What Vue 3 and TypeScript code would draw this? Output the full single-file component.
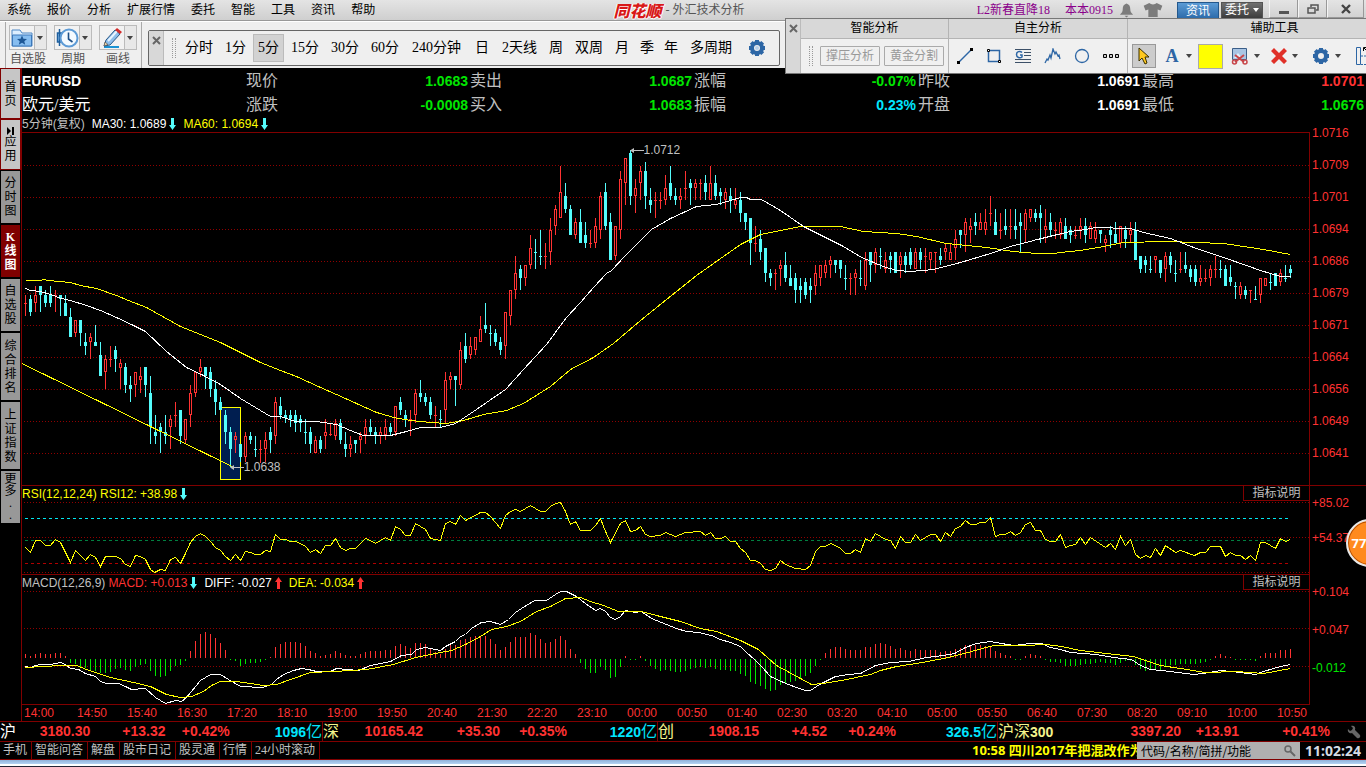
<script setup lang="ts">
const menus = ['系统', '报价', '分析', '扩展行情', '委托', '智能', '工具', '资讯', '帮助']

const periods = [
  { label: '分时', pad: '' }, { label: '1分', pad: '' }, { label: '5分', pad: 'active' },
  { label: '15分', pad: '' }, { label: '30分', pad: '' }, { label: '60分', pad: '' },
  { label: '240分钟', pad: 'roomy' }, { label: '日', pad: 'roomy' }, { label: '2天线', pad: '' },
  { label: '周', pad: '' }, { label: '双周', pad: '' }, { label: '月', pad: '' },
  { label: '季', pad: 'tight' }, { label: '年', pad: 'tight' }, { label: '多周期', pad: 'roomy' },
]

const sideTabs = [
  { chars: ['首', '页'], kind: 'light h2' },
  { chars: ['应', '用'], kind: 'light h2', icon: true },
  { chars: ['分', '时', '图'], kind: 'h3' },
  { chars: ['K', '线', '图'], kind: 'current h3' },
  { chars: ['自', '选', '股'], kind: 'h3' },
  { chars: ['综', '合', '排', '名'], kind: 'h4' },
  { chars: ['上', '证', '指', '数'], kind: 'h4' },
  { chars: ['更', '多', '.', '.'], kind: 'h3 more' },
]

const quotes = [
  { label: '现价', value: '1.0683', tone: 'down' }, { label: '卖出', value: '1.0687', tone: 'down' },
  { label: '涨幅', value: '-0.07%', tone: 'down' }, { label: '昨收', value: '1.0691', tone: 'flat' },
  { label: '最高', value: '1.0701', tone: 'up' },
  { label: '涨跌', value: '-0.0008', tone: 'down' }, { label: '买入', value: '1.0683', tone: 'down' },
  { label: '振幅', value: '0.23%', tone: 'aqua' }, { label: '开盘', value: '1.0691', tone: 'flat' },
  { label: '最低', value: '1.0676', tone: 'down' },
]

const priceTicks = ['1.0716', '1.0709', '1.0701', '1.0694', '1.0686', '1.0679', '1.0671', '1.0664', '1.0656', '1.0649', '1.0641']
const times = ['14:00', '14:50', '15:40', '16:30', '17:20', '18:10', '19:00', '19:50', '20:40', '21:30', '22:20', '23:10', '00:00', '00:50', '01:40', '02:30', '03:20', '04:10', '05:00', '05:50', '06:40', '07:30', '08:20', '09:10', '10:00', '10:50']

const indices = [
  { name: '沪', num: '', tone: 'white', last: '3180.30', diff: '+13.32', pct: '+0.42%', amount: '1096', cls: 's1' },
  { name: '深', num: '', tone: 'cream', last: '10165.42', diff: '+35.30', pct: '+0.35%', amount: '1220', cls: 's2' },
  { name: '创', num: '', tone: 'cream', last: '1908.15', diff: '+4.52', pct: '+0.24%', amount: '326.5', cls: 's3' },
  { name: '沪深', num: '300', tone: 'cream', last: '3397.20', diff: '+13.91', pct: '+0.41%', amount: '', cls: 's4' },
]
const links = ['手机', '智能问答', '解盘', '股市日记', '股灵通', '行情', '24小时滚动']

/* Candles: direction, high, low, then body top and bottom (one number for a doji).
   Levels are in thirds of a pixel, measured from the batch's own top. */
const batches: { top: number; rows: string }[] = [
  { top: 60, rows: 'r 705 768 730,c 705 768 717 756,r 678 756 705 730,c 678 756 678 705,c 690 742 705 730,c 678 742 703 730,r 690 756 705,c 705 768 705 717,c 705 768 730 768' },
  { top: 300, rows: 'c 24 110 52 110,r 60 110 60 98,c 60 138 60 98,c 98 165 126 138,r 98 177 110 126,c 75 138 126 138,c 126 228 165 228,r 165 266 177 216,r 138 202 177,c 138 216 150 177,r 177 266 190 203,c 190 278 202 255,c 228 305 255 266,r 216 290 216 255,r 202 278 228 241,c 202 290 202 255,c 228 432 278 380,c 345 432 396 408,c 369 459 380 396,c 345 432 396 408,r 345 447 357 380,r 306 380 345,c 330 432 330 408,r 357 432 357 420,r 255 380 278 345,r 213 290 216 278,r 177 230 201 216,c 201 266 201 228,c 201 290 216 266,c 240 345 266 305,c 290 330 305 330,c 330 432 345 396,c 380 500 396 447,r 396 459 408 420,c 432 486 432 470,r 396 486 408 470,c 396 432 408 420,c 408 470 447,r 420 490 447,r 396 486 420 447,c 380 459 396 420,r 290 432 306 408,c 290 357 318 345,c 330 369 345 354,c 330 380 345 357,c 330 396 345 369,c 345 396 357 369,c 357 432 396,c 380 459 396 432,r 408 459 420 459,c 408 459 420 447,r 357 447 396 408,r 369 408 404,r 357 420 369 408,c 357 432 369 420,c 396 470 432 447,r 408 470 432 447,c 420 459 420 432,r 396 459 408 420,r 357 432 380 405,c 357 408 380 396,c 380 432 396 405,r 380 432 396 408,r 357 420 380 405' },
  { top: 130, rows: 'c 878 917 890 905,r 828 917 828 905,c 801 855 816 840,c 840 890 855 868,r 840 917 868,r 777 878 789 855,c 750 816 789 801,c 789 828 801 816,c 801 866 816 855,r 828 890 856,c 840 892 868,r 726 880 750 840,r 726 777 738 750,c 738 828 738 750,r 636 777 660 765,c 609 699 648 687,r 621 687 648 675,r 621 675 621 660,r 558 636 597 636,c 519 609 585 597,c 585 648 610,c 597 648 609 636,c 621 675 636 660,r 546 687 546 648,r 480 585 480 557,r 378 507 429 480,c 405 480 417 444,r 405 468 405 444,r 315 417 354 405,c 327 417 367,c 300 405 379,r 339 417 379,r 264 405 300 366,r 225 315 237 288,r 108 264 186 263,c 159 249 198 237,c 225 315 237 315,r 264 327 276 315,c 237 339 276 339,c 276 354 315 339,r 300 354 340,r 264 354 288 339,r 186 327 198 300,c 159 300 186 288,c 249 390 276 390,r 288 390 288 378,r 123 327 147 300,r 84 225 84 159,c 60 225 69 198,r 147 249 174 198,r 108 210 123 159,c 96 237 123 198,c 174 249 210 225,r 186 264 211,r 186 237 211,r 135 225 174 210,c 108 210 159 198,c 174 225 198 210,r 174 237 198 210,r 123 210 175,c 147 225 159 174,r 147 210 159 174,r 147 210 160,c 135 210 159 186,r 108 210 159 210,c 135 210 159 198,c 174 225 186 198,r 174 237 186 210,c 174 249 198 210,r 174 237 210 225,c 186 276 210 249,c 249 300 249 276,c 264 405 264 339,r 288 366 340,c 300 390 327 366,c 354 456 354 429,c 417 468 429 444,r 417 480 430' },
  { top: 130, rows: 'r 390 468 405 417,c 366 456 405 444,c 405 468 444 468,c 429 519 444 480,c 444 519 468 480,c 444 507 456 495,c 444 519 468 480,r 405 495 429 468,r 405 468 405 444,r 390 444 405 429,r 378 444 390 405,c 390 429 390 405,c 390 444 390 417,c 405 480 445,r 429 495 445,r 417 495 429 444,c 390 468 445,r 366 480 390 468,c 366 456 366 405,r 354 429 366 405,c 354 417 379,r 366 429 390 417,c 366 429 378 390,c 366 429 366 429,r 366 444 378 405,c 366 429 378 405,c 354 417 366 405,r 354 417 366 417,c 354 417 366 390,r 354 429 379,r 366 417 366 390,r 366 429 367,c 354 405 378 390,r 342 390 354 366,r 339 390 366 390,r 300 390 327 354,c 300 354 300 315,r 264 366 276 315,r 264 339 288 300,c 249 315 276 288,r 249 300 276 300,r 237 315 276 300,r 198 288 250,c 237 315 276 315,r 249 327 301,c 237 315 288 300,r 237 327 289,c 237 327 288 300,c 249 366 276 288,r 237 339 249 300,r 237 276 237 264,c 237 276 249 264,c 225 339 249 264,r 237 339 288 300,c 249 318 276 300,r 276 327 301,r 264 327 276 315,c 264 327 288 327,c 288 339 300 315,r 288 327 316,r 264 327 288 300,c 264 339 288 315,r 276 327 288 327,r 276 339 300 327' },
  { top: 180, rows: 'c 150 189 150 162,r 165 216 177 190,c 138 204 150 165,c 126 189 162 189,r 138 204 138 189,c 138 204 150 177,r 126 189 150 165,c 126 240 150 240,c 228 279 228 267,c 228 279 240 255,c 228 279 268,r 228 279 228 240,c 240 294 240 279,r 216 306 228 267,c 216 279 228 255,c 240 306 280,r 216 279 268,c 216 279 255 267,c 255 306 267 291,c 255 318 267 306,r 255 318 294 306,r 267 306 295,r 255 318 267 294,r 228 294 268,c 240 294 268,c 255 318 267 318,c 255 318 291 306,c 306 357 319,r 306 357 318 345,c 318 357 330 345,r 330 369 331,c 318 360 358,r 294 369 294 345,r 294 318 294 318,c 279 330 307,c 279 318 279 318,r 267 318 279 306,c 255 306 295,c 255 294 267 279' },
]

const box = (x: number, y1: number, y2: number, w: number) => `M${x} ${y1}h${w}V${y2}h${-w}z`

function buildCandles(): { rise: string; fall: string } {
  let rise = ''
  let fall = ''
  let x = 25
  for (const batch of batches) {
    for (const row of batch.rows.split(',')) {
      const [dir, ...raw] = row.split(' ')
      const v = raw.map(n => batch.top + Number(n) / 3)
      const hi = Math.round(v[0])
      const lo = Math.round(v[1])
      const flat = v.length === 3
      const top = flat ? Math.floor(v[2]) : Math.round(v[2])
      const bottom = flat ? top + 1 : Math.round(v[3])
      let d = box(x - 1, top, bottom, 3)
      if (hi < top) d += box(x, hi, top, 1)
      if (lo > bottom) d += box(x, bottom, lo, 1)
      if (dir === 'r') {
        if (bottom - top > 2) d += box(x, top + 1, bottom - 1, 1)
        rise += d
      } else {
        fall += d
      }
      x += 5
    }
  }
  return { rise, fall }
}
const candles = buildCandles()

/* Histogram bar ends, same third-of-a-pixel scale; the zero line lies between 534 and 537. */
const bars = '522 528 522 519 522 522 519 519 528 549 552 561 564 570 573 579 579 576 567 564 570 573 561 555 552 573 588 591 588 573 558 555 543 513 483 462 456 462 474 489 510 537 543 558 552 549 549 546 537 531 501 492 486 486 486 489 498 513 519 528 525 522 513 519 525 528 528 522 516 513 513 513 510 510 498 492 498 504 489 489 492 504 516 522 508 495 495 480 477 471 468 468 468 477 492 510 501 486 471 471 471 459 465 477 489 486 477 468 480 507 522 549 567 579 579 561 570 594 591 561 528 537 537 528 543 558 567 573 570 573 576 576 573 567 564 561 564 561 567 570 570 573 573 582 588 606 612 618 627 633 630 615 612 606 603 597 588 579 558 537 519 507 501 501 507 510 510 510 501 501 492 489 492 498 507 504 510 513 507 510 510 510 510 516 513 513 507 504 495 498 495 495 498 501 513 519 525 528 537 537 528 522 525 528 537 546 546 549 558 558 558 555 552 552 549 546 549 549 555 549 543 543 555 567 573 570 570 570 558 555 555 552 552 552 552 549 546 537 528 522 528 531 537 537 540 540 543 528 519 519 519 510 510 507'.split(' ').map(Number)

function buildBars(above: boolean): string {
  return bars.map((v, i) => {
    const x = 25 + i * 5
    const end = 480 + v / 3
    if (above) return v < 535 ? box(x, Math.round(end), 658, 1) : ''
    return v > 535 ? box(x, 659, Math.max(660, Math.round(end)), 1) : ''
  }).join('')
}
const barsUp = buildBars(true)
const barsDown = buildBars(false)

type Piece = [number, number, string]
function trace(pieces: Piece[]): string {
  return pieces.map(([ox, oy, pts]) => pts.split(' ').map(p => {
    const [a, b] = p.split(',').map(Number)
    return `${Math.floor(ox + a / 3) + 0.5},${Math.floor(oy + b / 3) + 0.5}`
  }).join(' ')).join(' ')
}

const ma30 = trace([
  [0, 60, '75,685 90,690 120,694 150,703 185,714'],
  [0, 300, '210,0 260,15 300,30 350,51 400,75 437,95 500,153 560,202 610,226 660,253 720,296 780,332 810,348 840,350 885,363 950,365 1010,372 1050,390 1090,406'],
  [380, 130, '0,917 30,915 80,905 120,892 180,892 225,879 280,843 375,777 430,718 500,642 560,563 600,516 640,472 680,429 695,420 735,375 770,342 815,297 870,264 950,230 1010,223 1050,210'],
  [700, 130, '120,202 138,202 150,208 185,208 240,240 310,288 370,320 430,349 485,382 550,408 590,422 630,424 700,417 780,396 870,370 930,348 1000,332 1060,316'],
  [1060, 180, '30,155 75,149 105,143 150,142 165,145 212,146 250,158 330,175 410,206 500,234 600,270 660,289 690,289'],
])
const ma60 = trace([
  [0, 60, '75,661 120,661 130,658 145,661 210,666 240,675 290,686 350,706'],
  [0, 300, '385,0 440,21 540,79 660,127 780,187 840,211 890,229 960,263 1010,282 1070,310 1130,336'],
  [380, 130, '0,850 40,863 90,870 150,876 200,880 250,870 310,852 380,841 430,820 510,769 570,719 640,682 700,640 780,570 860,507 950,436 1080,342'],
  [700, 130, '180,314 300,289 420,289 490,303 590,311 650,319 740,341 860,352 940,364 1010,370 1060,370'],
  [1060, 180, '0,217 60,210 130,198 190,187 320,184 410,188 490,191 550,198 610,207 690,223'],
])
const rsi = trace([
  [0, 480, '75,201 92,217 107,181 122,181 137,196 152,196 167,178 182,187 212,247 227,211 257,241 272,223 287,232 302,259 317,229 347,229 362,235 377,252 392,259 407,226 422,229 437,238 452,268 464,277 482,268 497,271 512,238 527,232 542,250 557,220 572,187 587,168 600,159 617,168 632,184 647,201 662,211 677,229 692,241 707,223 722,241 737,213 752,216 767,222 782,222 797,211 812,214 826,163 842,178 857,178 872,184 887,184 902,190 917,199 932,217 947,208 962,220 977,197 992,196 1007,175 1022,202 1037,211 1052,205 1067,205 1082,190 1097,175 1112,181 1127,189 1142,181 1157,173 1172,180 1187,139 1202,147 1217,166 1232,166 1247,130 1262,139 1277,148 1292,174'],
  [440, 480, '0,181 15,130 30,124 47,133 62,106 77,121 122,97 137,97 152,109 182,145 197,106 212,93 227,87 242,94 272,76 302,94 317,94 332,79 347,70 362,67 377,94 392,133 407,124 422,151 452,151 467,136 482,115 497,154 512,187 542,130 557,121 572,154 587,151 602,139 617,163 632,169 662,166 677,157 707,169 737,157 752,157 767,154 782,154 797,165 812,157 827,175 842,175 857,169 872,183 887,184 902,205 917,217 932,241 947,241 962,250 977,267 990,271 1005,264 1021,241 1037,253 1065,265 1097,268 1112,255 1127,213 1142,199 1157,199 1172,190 1187,196 1202,205 1217,220 1232,220 1247,208 1262,217 1276,175 1292,184 1307,160'],
  [880, 480, '0,169 15,177 32,180 47,205 62,170 77,187 92,187 107,162 122,180 152,163 167,163 182,184 197,157 212,168 227,145 242,138 257,121 272,133 287,133 302,127 317,127 332,112 347,169 362,163 377,163 392,154 407,165 422,157 437,133 452,127 467,151 482,151 497,177 512,184 527,184 542,163 557,202 572,195 587,193 602,172 617,193 632,172 677,202 692,190 707,208 722,170 737,195 752,178 767,223 782,235 797,226 812,232 827,205 842,226 857,196 887,217 902,211 942,226 962,217 977,217 992,199 1022,199 1037,229 1052,217 1067,226 1082,226 1097,237 1112,226 1127,241 1142,187 1157,187 1187,205 1202,175 1217,184 1230,178'],
])
const diff = trace([
  [0, 480, '75,559 90,562 105,556 120,553 150,553 182,547 195,552 212,565 235,567 255,580 285,588 302,604 320,609 355,610 375,618 393,628 437,625 465,652 497,670 525,661 545,664 560,653 600,601 630,583 660,583 685,598 722,619 787,622 815,613 830,597 850,582 880,570 905,564 925,567 950,573 990,574 1010,565 1075,570 1110,555 1170,544 1205,525 1235,522 1250,508 1275,501'],
  [440, 480, '0,512 15,500 45,483 62,469 75,463 95,445 125,428 150,423 182,433 205,417 225,397 245,385 282,361 320,361 345,343 360,333 380,334 410,348 435,370 465,391 482,385 497,393 510,413 525,418 542,410 557,391 585,397 605,395 635,415 680,432 710,446 740,453 775,456 815,465 840,478 870,486 900,500 920,517 945,541 965,560 990,590 1030,608 1070,622 1097,632 1112,631 1130,618 1150,607 1185,589 1225,583 1260,580 1305,557'],
  [880, 480, '0,552 30,546 85,543 140,533 190,527 222,520 257,502 290,490 332,484 365,491 400,496 450,490 485,490 510,501 540,507 570,518 650,523 700,532 755,538 780,555 812,568 870,573 940,583 970,580 1020,571 1080,577 1127,583 1150,573 1200,560 1230,553'],
])
const dea = trace([
  [0, 480, '75,562 130,560 180,555 230,556 260,567 330,592 400,608 450,620 500,642 540,652 575,650 610,633 635,616 660,604 710,604 750,609 790,616 830,613 870,597 930,577 1000,573 1100,567 1180,553 1245,532'],
  [440, 480, '0,516 35,510 75,493 120,468 155,448 200,439 240,423 290,394 330,378 375,355 420,352 450,364 490,375 535,394 605,394 650,405 720,425 780,444 830,454 900,480 955,508 1010,555 1080,595 1115,612 1150,611 1220,597 1290,583'],
  [880, 480, '0,572 50,558 110,549 190,535 240,524 340,496 430,496 500,492 545,499 600,512 680,521 760,530 840,556 900,566 975,577 1070,575 1150,579 1230,565'],
])

const priceGrid = Array.from({ length: 10 }, (_, i) => 165.5 + i * 32)
const peaks = [
  { text: '1.0712', x: 608, y: 10 },
  { text: '1.0638', x: 208, y: 327 },
].map(p => ({ text: p.text, style: { left: (p.x / 1288) * 100 + '%', top: p.y + 'px' } }))
</script>

<template>
  <div class="app">
    <header class="titlebar">
      <nav class="menu"><button v-for="m in menus" :key="m" type="button">{{ m }}</button></nav>
      <div class="title"><strong class="logo">同花顺</strong><span>- 外汇技术分析</span></div>
      <div class="tools">
        <a href="#" class="promo">L2新春直降18</a>
        <a href="#" class="user">本本0915</a>
        <svg class="bell" width="15" height="16" viewBox="0 0 16 16"><path d="M8 1c-3 1-4 3-4 6 0 3-1 4-3 6h14c-2-2-3-3-3-6 0-3-1-5-4-6z M6 14h4l-2 2z" fill="#7c7c7c" /></svg>
        <svg class="shirt" width="20" height="14" viewBox="0 0 20 15"><path d="M6 0C8 2 12 2 14 0l6 3-2 5-3-1v8H5V7L2 8 0 3z" fill="#7c7c7c" /></svg>
        <button type="button" class="chip blue">资讯</button>
        <button type="button" class="chip dark">委托<i class="caret light"></i></button>
        <div class="window">
          <button type="button" aria-label="最小化"><svg width="12" height="12" viewBox="0 0 12 12"><path d="M1 8h10v3H1z" fill="#555" /></svg></button>
          <button type="button" aria-label="还原"><svg width="12" height="12" viewBox="0 0 12 12" fill="none" stroke="#555" stroke-width="1.500"><path d="M4 4V2h7v5H9M1 5h7v5H1z" /></svg></button>
          <button type="button" aria-label="关闭" class="wide"><svg width="12" height="12" viewBox="0 0 12 12" stroke="#444" stroke-width="2.400"><path d="M2 2l8 8M10 2l-8 8" /></svg></button>
        </div>
      </div>
    </header>

    <section class="ribbon">
      <div class="quick">
        <div class="quick-item">
          <button type="button" aria-label="自选股">
            <svg width="24" height="24" viewBox="0 0 24 24"><path d="M2 4h8l2 3h10v13H2z" fill="#dceeff" stroke="#4c86c4" /><path d="M2.500 9h19v11h-19z" fill="#86bdf0" stroke="#3c78ba" /><path d="M12 9.500l1.400 3.200 3.600.3-2.700 2.200.9 3.500-3.200-1.900-3.200 1.900.9-3.500L7 13l3.600-.3z" fill="#1d5796" /></svg>
            <i class="caret"></i>
          </button>
          <span>自选股</span>
        </div>
        <div class="quick-item">
          <button type="button" aria-label="周期">
            <svg width="24" height="24" viewBox="0 0 24 24"><path d="M4.500 3v17M2.500 7h4v9h-4z" fill="#9dcbf5" stroke="#1e5f9e" stroke-width="1.500" /><circle cx="14" cy="12" r="8.500" fill="#f4faff" stroke="#5d9bd6" stroke-width="2" /><path d="M13.500 6.500V13l4 3" fill="none" stroke="#1d4f86" stroke-width="1.600" /></svg>
            <i class="caret"></i>
          </button>
          <span>周期</span>
        </div>
        <div class="quick-item">
          <button type="button" aria-label="画线">
            <svg width="24" height="24" viewBox="0 0 24 24"><path d="M4 21h15" stroke="#1a93d4" stroke-width="2" /><path d="M4 20l2-6L15 4l5 4-10 11z" fill="#8dbdea" stroke="#2b5988" /><path d="M8 15l9-10" stroke="#e8f4ff" stroke-width="2" /><path d="M15 4l2-2 5 4-2 2z" fill="#d22b2b" /><path d="M4 20l1-4 3 2.500z" fill="#f5d9a8" stroke="#444" stroke-width=".6" /></svg>
            <i class="caret"></i>
          </button>
          <span>画线</span>
        </div>
      </div>
      <div class="periods">
        <button type="button" class="strip" aria-label="关闭周期栏"><svg width="9" height="9" viewBox="0 0 9 9" stroke="#666" stroke-width="2"><path d="M1 1l7 7M8 1l-7 7" /></svg></button>
        <i class="grip"></i>
        <button v-for="p in periods" :key="p.label" type="button" class="period" :class="p.pad">{{ p.label }}</button>
        <button type="button" class="icon-btn" aria-label="设置">
          <svg width="18" height="18" viewBox="-9 -9 18 18"><circle r="5" fill="none" stroke="#2d66a5" stroke-width="4" /><path d="M0-8V-5M0 8V5M-8 0h3M8 0H5M-5.700-5.700l2 2M5.700 5.700l-2-2M-5.700 5.700l2-2M5.700-5.700l-2 2" stroke="#2d66a5" stroke-width="4" /><circle r="2" fill="#b8d0ea" /></svg>
        </button>
      </div>
    </section>

    <aside class="palette">
      <button type="button" class="strip" aria-label="关闭工具栏"><svg width="9" height="9" viewBox="0 0 9 9" stroke="#666" stroke-width="2"><path d="M1 1l7 7M8 1l-7 7" /></svg></button>
      <section class="group smart">
        <h2>智能分析</h2>
        <div class="row"><i class="grip"></i><button type="button" class="ghost" disabled>撑压分析</button><button type="button" class="ghost" disabled>黄金分割</button></div>
      </section>
      <section class="group own">
        <h2>自主分析</h2>
        <div class="row icons">
          <button type="button" aria-label="线段"><svg width="16" height="16" viewBox="0 0 16 16"><path d="M2 14L14 2" stroke="#2d66a5" stroke-width="1.500" /><path d="M0 13h3v3H0zM13 0h3v3h-3z" /></svg></button>
          <button type="button" aria-label="矩形"><svg width="16" height="16" viewBox="0 0 16 16"><path d="M2.500 2.500h11v11h-11z" fill="none" stroke="#2d66a5" stroke-width="1.500" /><path d="M1.500 1.500h2v2h-2zM12.500 12.500h2v2h-2z" fill="#fff" stroke="#000" /></svg></button>
          <button type="button" aria-label="黄金线"><svg width="16" height="16" viewBox="0 0 16 16"><path d="M0 1.500h16M9 4.500h7M9 7.500h7M0 11.500h16M0 14.500h16" stroke="#3c5068" /><path d="M7 4.500C5 2.500 1.500 3.500 1.500 6.500S5 10.500 7 9V7H5" fill="none" stroke="#2d66a5" stroke-width="1.500" /></svg></button>
          <button type="button" aria-label="波浪线"><svg width="17" height="16" viewBox="0 0 17 16"><path d="M1 15l2-4 1 1 2-5 1 3 2-9 2 5 1-2 2 4 1-1 1 4" fill="none" stroke="#2d66a5" stroke-width="1.300" /></svg></button>
          <button type="button" aria-label="圆"><svg width="16" height="16" viewBox="0 0 16 16"><circle cx="8" cy="8" r="6.500" fill="none" stroke="#2d66a5" stroke-width="1.300" /></svg></button>
          <button type="button" aria-label="更多"><svg width="16" height="16" viewBox="0 0 16 16"><path d="M.5 6.500h3v3h-3zM6.500 6.500h3v3h-3zM12.500 6.500h3v3h-3z" fill="#ccc" stroke="#000" /></svg></button>
        </div>
      </section>
      <section class="group assist">
        <h2>辅助工具</h2>
        <div class="row assist-row">
          <button type="button" class="pointer" aria-label="选择"><svg width="12" height="18" viewBox="0 0 12 18"><path d="M1 1v13l3-3 3 6 2-1-2-6h4z" fill="#ffc81e" stroke="#3a3000" /></svg></button>
          <button type="button" class="letter" aria-label="文字">A</button><i class="caret"></i>
          <button type="button" class="swatch" aria-label="颜色"></button>
          <button type="button" class="cut" aria-label="截图"><svg width="18" height="18" viewBox="0 0 18 18"><path d="M1.500 1.500h14v11h-14z" fill="#a9c5e4" stroke="#3b5e88" /><path d="M3 11l4-5 4 5" fill="#e4effa" /><path d="M4 8l9 7M13 8l-9 7" stroke="#c8464a" stroke-width="2" /><circle cx="3.500" cy="15" r="2" fill="none" stroke="#c8464a" stroke-width="1.500" /><circle cx="14" cy="15" r="2" fill="none" stroke="#c8464a" stroke-width="1.500" /></svg></button><i class="caret"></i>
          <button type="button" aria-label="删除"><svg width="16" height="16" viewBox="0 0 16 16"><path d="M3 0l5 5 5-5 3 3-5 5 5 5-3 3-5-5-5 5-3-3 5-5-5-5z" fill="#e03028" /></svg></button><i class="caret"></i>
          <button type="button" aria-label="设置"><svg width="18" height="18" viewBox="-9 -9 18 18"><circle r="5" fill="none" stroke="#2d66a5" stroke-width="4" /><path d="M0-8V-5M0 8V5M-8 0h3M8 0H5M-5.700-5.700l2 2M5.700 5.700l-2-2M-5.700 5.700l2-2M5.700-5.700l-2 2" stroke="#2d66a5" stroke-width="4" /></svg></button><i class="caret"></i>
          <button type="button" aria-label="布局"><svg width="20" height="20" viewBox="0 0 20 20"><path d="M1.500 1.500h4v17h-4z" fill="none" stroke="#2d66a5" /><path d="M6 18.500h12M6 10h10" fill="none" stroke="#2d66a5" stroke-dasharray="2 1" /><path d="M8.500 5V1.500H12M9 2l4 4" fill="none" stroke="#000" /></svg></button>
        </div>
      </section>
    </aside>

    <div class="body">
      <nav class="side">
        <button v-for="t in sideTabs" :key="t.chars.join('')" type="button" :class="t.kind">
          <svg v-if="t.icon" width="8" height="8" viewBox="0 0 8 8"><path d="M0 0l4 4-4 4zM5 0h2v8H5z" /></svg>
          <span v-for="(c, i) in t.chars" :key="i">{{ c }}</span>
        </button>
      </nav>

      <main class="content">
        <section class="quote">
          <h1>EURUSD</h1>
          <div v-for="q in quotes.slice(0, 5)" :key="q.label" class="cell"><span>{{ q.label }}</span><b :class="q.tone">{{ q.value }}</b></div>
          <div class="pair">欧元/美元</div>
          <div v-for="q in quotes.slice(5)" :key="q.label" class="cell"><span>{{ q.label }}</span><b :class="q.tone">{{ q.value }}</b></div>
        </section>
        <div class="legend top">
          <span class="grey">5分钟(复权)</span>
          <span class="white">MA30: 1.0689<svg class="arrow" viewBox="0 0 7 12"><path d="M2 0h3v7h2l-3.500 5L0 7h2z" fill="#54fcfc" /></svg></span>
          <span class="yellow">MA60: 1.0694<svg class="arrow" viewBox="0 0 7 12"><path d="M2 0h3v7h2l-3.500 5L0 7h2z" fill="#54fcfc" /></svg></span>
        </div>

        <div class="panel price">
          <div class="plot">
            <svg viewBox="22 133 1287 352" preserveAspectRatio="none" shape-rendering="crispEdges">
              <path v-for="y in priceGrid" :key="y" :d="`M24 ${y}H1309`" class="dots" />
              <path d="M220.500 407.500h20v72h-20z" fill="#001e50" stroke="#ffff00" />
              <path :d="candles.rise" fill="#ff3232" fill-rule="evenodd" />
              <path :d="candles.fall" fill="#54fcfc" />
              <path d="M22 363.500L232 466.500" stroke="#ffff00" />
              <polyline :points="ma60" class="line y" />
              <polyline :points="ma30" class="line w" />
            </svg>
            <span v-for="p in peaks" :key="p.text" class="peak" :style="p.style"><svg width="14" height="7" viewBox="0 0 14 7"><path d="M1 3.500h13" stroke="#c0c0c0" /><path d="M0 3.500L4 1v5z" fill="#c0c0c0" /></svg>{{ p.text }}</span>
          </div>
          <ol class="axis"><li v-for="t in priceTicks" :key="t">{{ t }}</li></ol>
        </div>

        <div class="panel rsi">
          <div class="plot">
            <svg viewBox="22 486 1287 88" preserveAspectRatio="none" shape-rendering="crispEdges">
              <path d="M24 502.500H1309M24 537.500H1309M24 572.500H1309" class="dots" />
              <path d="M25 518.500H1289" class="dash" stroke="#00e6f0" />
              <path d="M25 540.500H1289" class="dash" stroke="#008040" />
              <path d="M25 563.500H1289" class="dash" stroke="#b00000" />
              <polyline :points="rsi" class="line y" />
            </svg>
            <div class="legend over"><span class="yellow">RSI(12,12,24) RSI12: +38.98<svg class="arrow" viewBox="0 0 7 12"><path d="M2 0h3v7h2l-3.500 5L0 7h2z" fill="#54fcfc" /></svg></span></div>
            <button type="button" class="explain">指标说明</button>
          </div>
          <ol class="axis"><li>+85.02</li><li>+54.37</li></ol>
        </div>

        <div class="panel macd">
          <div class="plot">
            <svg viewBox="22 575 1287 129" preserveAspectRatio="none" shape-rendering="crispEdges">
              <path d="M24 591.500H1309M24 628.500H1309M24 666.500H1309" class="dots" />
              <path :d="barsUp" fill="#ff3232" />
              <path :d="barsDown" fill="#00e600" />
              <polyline :points="diff" class="line w" />
              <polyline :points="dea" class="line y" />
            </svg>
            <div class="legend over">
              <span class="grey">MACD(12,26,9)</span>
              <span class="red near">MACD: +0.013<svg class="arrow" viewBox="0 0 7 12"><path d="M2 0h3v7h2l-3.500 5L0 7h2z" fill="#54fcfc" /></svg></span>
              <span class="white">DIFF: -0.027<svg class="arrow" viewBox="0 0 7 12"><path d="M2 12h3V5h2L3.500 0 0 5h2z" fill="#ff3232" /></svg></span>
              <span class="yellow">DEA: -0.034<svg class="arrow" viewBox="0 0 7 12"><path d="M2 12h3V5h2L3.500 0 0 5h2z" fill="#ff3232" /></svg></span>
            </div>
            <button type="button" class="explain">指标说明</button>
          </div>
          <ol class="axis"><li>+0.104</li><li>+0.047</li><li class="neg">-0.012</li></ol>
        </div>

        <ol class="times"><li v-for="t in times" :key="t">{{ t }}</li></ol>
      </main>
    </div>

    <section class="indices">
      <div v-for="s in indices" :key="s.name" class="index" :class="s.cls">
        <span class="name" :class="s.tone">{{ s.name }}<b v-if="s.num">{{ s.num }}</b></span>
        <b class="last">{{ s.last }}</b><b>{{ s.diff }}</b><b>{{ s.pct }}</b>
        <span v-if="s.amount" class="amount"><b>{{ s.amount }}</b>亿</span>
        <span v-else class="wrench"><svg width="14" height="14" viewBox="0 0 14 14"><path d="M4 1l2 2-1 2-2 1-2-2C0 7 3 9 5 8l5 5c2 1 4-1 3-3L8 5c1-3-1-5-4-4z" fill="#666" /></svg></span>
      </div>
    </section>

    <footer class="status">
      <nav><a v-for="l in links" :key="l" href="#">{{ l }}</a></nav>
      <div class="news">10:58 四川2017年把混改作为</div>
      <label class="search">
        <input type="text" aria-label="代码搜索" value="代码/名称/简拼/功能" />
        <svg width="12" height="12" viewBox="0 0 12 12"><circle cx="4" cy="4" r="3" fill="none" stroke="#666" stroke-width="1.500" /><path d="M6.500 6.500L11 11" stroke="#666" stroke-width="2" /></svg>
      </label>
      <time>11:02:24</time>
    </footer>
    <div class="edge"></div>

    <button type="button" class="bubble">77</button>
  </div>
</template>

<style>
body { margin: 0; background: #000; }
</style>

<style scoped>
.app {
  position: relative;
  min-height: 100vh;
  overflow: hidden;
  background: #000;
  color: #c0c0c0;
  font: 12px/16px "Liberation Serif", "Noto Sans CJK SC", serif;
}
.app *, .app *::before { box-sizing: border-box; }
button { margin: 0; padding: 0; border: 0; background: none; color: inherit; font: inherit; }
a { color: inherit; text-decoration: none; }
ol { margin: 0; padding: 0; list-style: none; }
svg { display: block; flex: none; }
.caret { flex: none; width: 0; height: 0; border: 3px solid transparent; border-top: 4px solid #444; border-bottom: 0; }
.caret.light { border-top-color: #fff; }

.titlebar {
  display: grid;
  grid-template-columns: 1fr auto 1fr;
  height: 21px;
  background: linear-gradient(#e4e4e4, #cfcfcf);
  border-bottom: 1px solid #999;
  color: #000;
}
.menu { display: flex; align-items: center; gap: 16px; padding-left: 7px; white-space: nowrap; }
.title { display: flex; align-items: center; gap: 4px; padding-right: 8px; color: #555; white-space: nowrap; }
.logo {
  color: #d81818;
  font: italic 900 16px/20px "Noto Sans CJK SC", sans-serif;
  text-shadow: 0 0 1px #fff, 1px 0 #fff, -1px 0 #fff, 0 1px #fff;
}
.tools { display: flex; align-items: center; justify-content: flex-end; padding-right: 2px; white-space: nowrap; }
.promo, .user { color: #8b008b; }
.promo { margin-right: 15px; }
.bell { margin: 0 9px 0 6px; }
.shirt { margin-right: 14px; }
.chip { height: 17px; line-height: 16px; width: 42px; border: 1px solid #555; color: #fff; }
.chip.blue { background: linear-gradient(#5b9bd5, #2d6cab); border-color: #24588c; margin-right: 2px; }
.chip.dark { display: flex; align-items: center; justify-content: center; gap: 4px; background: linear-gradient(#707070, #3c3c3c); }
.window { display: flex; margin-left: 6px; align-self: stretch; }
.window button { display: grid; place-items: center; width: 29px; height: 18px; border: 1px solid #999; border-top: 0; border-left-color: #f4f4f4; }
.window .wide { width: 37px; }

.ribbon { display: flex; height: 47px; background: #efefef; color: #555; border-top: 1px solid #fff; }
.quick { display: flex; gap: 7px; margin-left: 5px; padding: 3px 4px 0 3px; border-left: 1px solid #aaa; border-right: 1px solid #aaa; }
.quick-item { display: flex; flex-direction: column; align-items: center; }
.quick-item button { display: flex; align-items: center; justify-content: space-between; width: 38px; height: 25px; padding-right: 3px; border: 1px solid #bbb; background: linear-gradient(90deg, #f2f2f2 24px, #bbb 24px, #bbb 25px, #e8e8e8 25px); }
.quick-item span { line-height: 18px; }
.periods {
  display: flex;
  align-items: center;
  height: 36px;
  margin: 8px 0 0 6px;
  padding-right: 13px;
  border: 1px solid #666;
  border-radius: 2px;
  color: #000;
  font-size: 14px;
}
.strip { display: flex; justify-content: center; align-self: stretch; flex: none; width: 15px; padding-top: 5px; background: #d8d8d8; border-right: 1px solid #bbb; }
.grip { flex: none; width: 4px; height: 20px; margin: 0 3px 0 8px; border: dotted #999; border-width: 0 1px; }
.period { height: 26px; padding: 0 6px; white-space: nowrap; }
.period.roomy { padding: 0 7px; }
.period.tight { padding: 0 5px; }
.period.active { padding: 0 4px; margin: 0 2px; background: #d2d2d2; outline: 1px solid #bbb; }
.icon-btn { margin-left: 9px; }

.palette { position: absolute; top: 18px; left: 785px; right: 0; height: 56px; display: flex; overflow: hidden; background: #f0f0f0; border: 1px solid #777; border-right: 0; color: #000; }
.group { flex: none; border-right: 1px solid #b4b4b4; }
.smart { width: 148px; }
.own { width: 179px; }
.assist { width: 294px; }
.group h2 { margin: 0; height: 20px; background: #d8d8d8; border-bottom: 1px solid #b4b4b4; font-size: 12px; font-weight: 400; line-height: 19px; text-align: center; }
.row { display: flex; align-items: center; height: 34px; }
.row .grip { margin: 0 7px 0 8px; }
.ghost { flex: none; width: 60px; height: 20px; margin-right: 4px; border: 1px solid #aaa; border-radius: 1px; color: #999; line-height: 18px; }
.icons { padding-left: 8px; gap: 13px; }
.assist-row { padding-left: 4px; }
.pointer { display: grid; place-items: center; flex: none; width: 24px; height: 24px; background: #ccc; border: 1px solid #999; }
.letter { width: 14px; margin: 0 7px 0 9px; color: #2d66a5; font: bold 18px/24px "Liberation Serif", serif; }
.swatch { flex: none; width: 25px; height: 25px; margin: 0 8px 0 6px; background: #ffff00; border: 1px solid #aaa; }
.assist-row .caret { margin: 0 14px 0 5px; }
.assist-row .letter + .caret { margin: 0; }
.assist-row .cut + .caret { margin-right: 11px; }

.body { display: flex; }
.side { flex: none; display: flex; flex-direction: column; gap: 2px; width: 22px; padding: 1px 1px 0 1px; border-right: 1px solid #800000; color: #000; }
.side button { display: flex; flex-direction: column; align-items: center; justify-content: center; width: 19px; background: #989898; font-size: 12px; line-height: 14px; }
.side .light { background: #c6c6c6; outline: 1px solid #800000; }
.side .current { background: #800000; color: #fff; font-weight: 700; }
.side .h2 { height: 49px; }
.side .h3 { height: 52px; }
.side .h4 { height: 67px; }
.side .more { line-height: 12px; }

.content { flex: 1; min-width: 0; }
.quote { display: grid; grid-template-columns: repeat(6, 1fr); grid-auto-rows: 24px; padding-top: 1px; font-size: 16px; line-height: 24px; }
.quote h1 { margin: 0; color: #fff; font: bold 14px/24px "Liberation Sans", sans-serif; }
.pair { color: #fff; }
.cell { display: flex; justify-content: space-between; padding-right: 2px; }
.cell b { font: bold 14px/24px "Liberation Sans", sans-serif; }
.down { color: #00e600; }
.up { color: #ff3232; }
.flat { color: #fff; }
.aqua { color: #00e6ff; }

.legend { display: flex; gap: 7px; font: 12px/15px "Liberation Sans", "Noto Sans CJK SC", sans-serif; white-space: nowrap; }
.legend.top { height: 15px; }
.legend.over { position: absolute; top: 0; left: 0; padding-top: 1px; }
.legend .near { margin-left: -4px; }
.arrow { display: inline-block; width: 7px; height: 12px; margin-left: 3px; vertical-align: -2px; }
.grey { color: #c0c0c0; }
.white { color: #fff; }
.yellow { color: #ffff00; }
.red { color: #ff3232; }

.panel { display: flex; }
.plot { position: relative; flex: 1; min-width: 0; border-top: 1px solid #800000; border-right: 1px solid #800000; }
.plot > svg { width: 100%; }
.price .plot > svg { height: 352px; }
.price { height: 353px; }
.rsi .plot > svg { height: 88px; }
.macd .plot > svg { height: 129px; }
.macd .plot { border-bottom: 1px solid #800000; }
.dots { stroke: #900000; stroke-dasharray: 1 2; }
.dash { stroke-dasharray: 3 3; }
.line { fill: none; stroke-width: 1; }
.line.y { stroke: #ffff00; }
.line.w { stroke: #fff; }
.peak { position: absolute; display: flex; align-items: center; font: 12px/14px "Liberation Sans", sans-serif; color: #c0c0c0; }
.explain { position: absolute; top: 0; right: 0; width: 66px; height: 15px; background: #000; border: solid #800000; border-width: 0 0 1px 1px; line-height: 14px; }
.axis { flex: none; width: 56px; padding-left: 2px; color: #ff3232; font: 12px/16px "Liberation Sans", sans-serif; }
.price .axis { margin-top: -15px; }
.price .axis li { line-height: 32px; }
.rsi .axis, .macd .axis { display: flex; flex-direction: column; gap: 19px; padding-top: 9px; border-top: 1px solid #800000; }
.macd .axis { gap: 22px; border-top-color: #000; }
.axis .neg { color: #00e600; }
.times { display: flex; height: 16px; padding: 0 39px 0 5px; color: #ff3232; font: 12px/16px "Liberation Sans", sans-serif; }
.times li { flex: 1 1 0; }
.times li:first-child { text-indent: -3px; }

.indices { display: grid; grid-template-columns: 323fr 335fr 340fr 368fr; height: 21px; border: solid #800000; border-width: 1px 0; font-size: 16px; line-height: 19px; }
.index { display: grid; text-align: right; color: #ff3232; border-right: 1px solid #800000; white-space: nowrap; }
.index b { font: bold 14px/19px "Liberation Sans", sans-serif; }
.s1 { grid-template-columns: 20fr 70fr 75fr 64fr 92fr; }
.s2 { grid-template-columns: 20fr 80fr 77fr 67fr 90fr; }
.s3 { grid-template-columns: 20fr 81fr 68fr 69fr 101fr; }
.s4 { grid-template-columns: 60fr 123fr 58fr 91fr 36fr; border-right: 0; }
.name { text-align: left; }
.cream { color: #f4f48c; }
.amount { color: #00e6ff; }
.wrench { display: flex; align-items: center; justify-content: flex-end; padding-right: 5px; }

.status { display: flex; height: 18px; border-bottom: 1px solid #800000; line-height: 17px; }
.status nav { display: flex; }
.status a { padding: 0 4px 0 3px; border-right: 1px solid #800000; white-space: nowrap; }
.news { width: 165px; margin-left: auto; overflow: hidden; color: #ffff00; font: bold 13px/17px "Noto Sans", "Noto Sans CJK SC", sans-serif; white-space: nowrap; }
.search { display: flex; align-items: center; width: 163px; padding: 0 4px; background: #b0b0b0; }
.search input { flex: 1; min-width: 0; height: 17px; padding: 0; border: 0; outline: 0; background: none; color: #000; font: 12px/17px "Noto Sans CJK SC", sans-serif; }
.status time { width: 66px; padding-left: 5px; color: #d4dce4; font: bold 14px/17px "Noto Sans", sans-serif; }
.edge { height: 7px; background: linear-gradient(#8fb0d8, #b4d2f2 4px, #fff 4px, #fff 6px, #223 6px); }
.bubble { position: absolute; right: -28px; top: 519px; width: 48px; height: 48px; padding-right: 22px; border: 2px solid #e8e8e8; border-radius: 50%; background: #ff8a1e; box-shadow: inset 0 0 0 1px #b85000; color: #fff; font: bold 13px/44px "Noto Sans", sans-serif; }
</style>
